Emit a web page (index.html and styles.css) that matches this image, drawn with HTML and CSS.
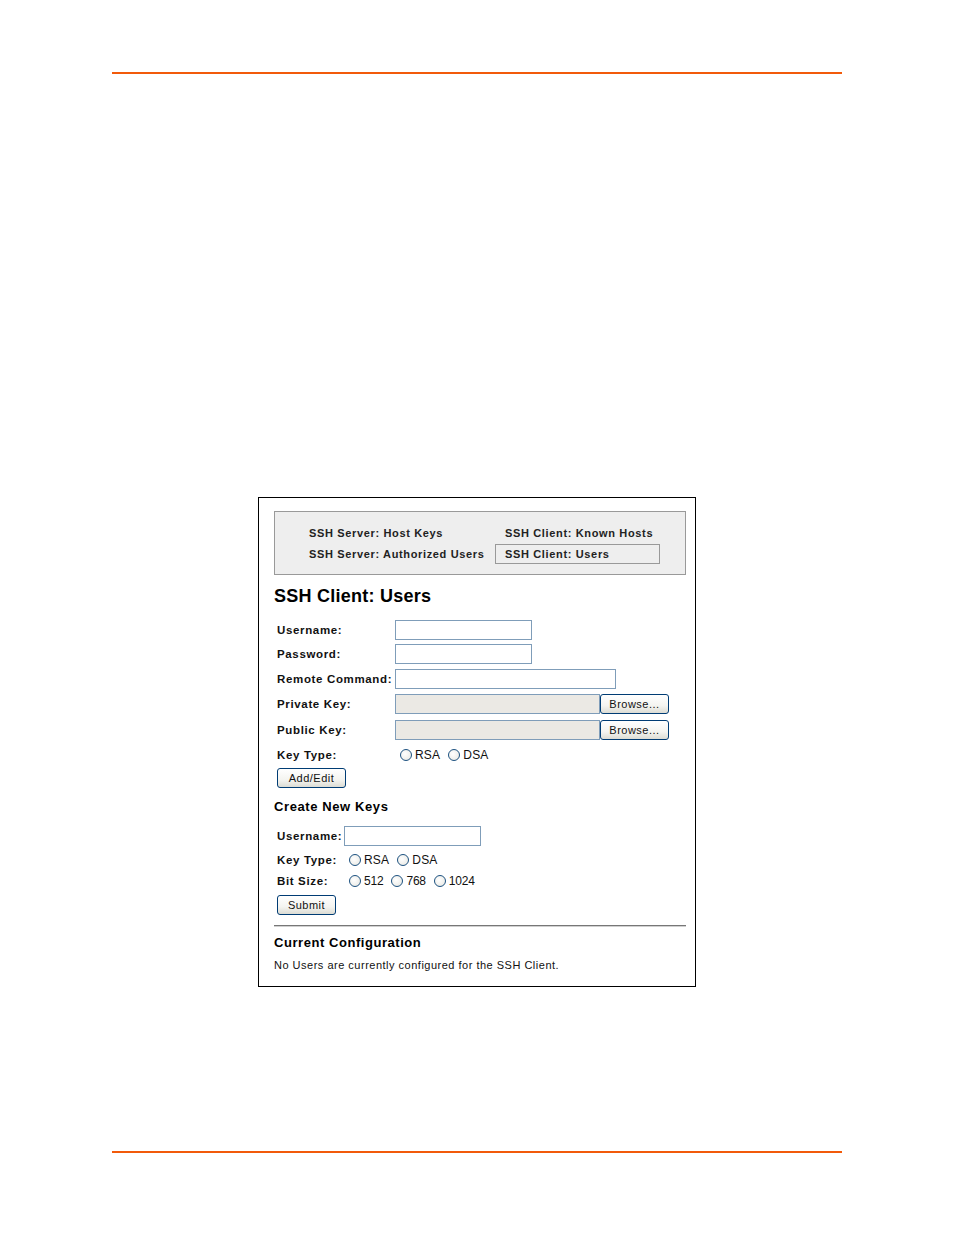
FILE: index.html
```html
<!DOCTYPE html>
<html>
<head>
<meta charset="utf-8">
<link rel="stylesheet" href="styles.css">
</head>
<body>
<div class="page">
  <div class="rule rule-top"></div>
  <div class="figure">
    <div class="nav">
      <div class="nav-item">SSH Server: Host Keys</div>
      <div class="nav-item nav-right">SSH Client: Known Hosts</div>
      <div class="nav-item">SSH Server: Authorized Users</div>
      <div class="nav-item nav-right nav-current">SSH Client: Users</div>
    </div>
    <h1 class="title">SSH Client: Users</h1>
    <div class="form">
      <div class="row h24"><span class="label">Username:</span><span class="input w136"></span></div>
      <div class="row h24"><span class="label">Password:</span><span class="input w136"></span></div>
      <div class="row h25"><span class="label">Remote Command:</span><span class="input w220"></span></div>
      <div class="row h25"><span class="label">Private Key:</span><span class="file"></span><span class="btn btn-browse">Browse...</span></div>
      <div class="row h26 row-low"><span class="label">Public Key:</span><span class="file"></span><span class="btn btn-browse">Browse...</span></div>
      <div class="row h25"><span class="label">Key Type:</span><span class="radios"><span class="radio"></span><span class="rtext">RSA</span><span class="radio"></span><span class="rtext">DSA</span></span></div>
      <div class="row h22"><span class="btn btn-add">Add/Edit</span></div>
    </div>
    <h2 class="sub sub-keys">Create New Keys</h2>
    <div class="form form2">
      <div class="row h24"><span class="label label-short">Username:</span><span class="input w136"></span></div>
      <div class="row h24"><span class="label label-short">Key Type:</span><span class="radios"><span class="radio"></span><span class="rtext">RSA</span><span class="radio"></span><span class="rtext">DSA</span></span></div>
      <div class="row h18"><span class="label label-short">Bit Size:</span><span class="radios"><span class="radio"></span><span class="rtext num">512</span><span class="radio"></span><span class="rtext num">768</span><span class="radio"></span><span class="rtext num">1024</span></span></div>
      <div class="row h30"><span class="btn btn-submit">Submit</span></div>
    </div>
    <div class="divider"></div>
    <h2 class="sub sub-config">Current Configuration</h2>
    <p class="note">No Users are currently configured for the SSH Client.</p>
  </div>
  <div class="rule rule-bottom"></div>
</div>
</body>
</html>
```
FILE: styles.css
```css
html, body {
  margin: 0;
  padding: 0;
  background: #ffffff;
}
body {
  font-family: "Liberation Sans", Arial, sans-serif;
  color: #000;
}
.page {
  width: 954px;
  height: 1235px;
  padding-top: 72px;
  box-sizing: border-box;
}
.rule {
  margin-left: 112px;
  width: 730px;
  height: 2px;
  background: #f25a0a;
}
.figure {
  margin-top: 423px;
  margin-left: 258px;
  width: 438px;
  height: 490px;
  box-sizing: border-box;
  border: 1px solid #000;
  padding: 13px 9px 0 15px;
}
.rule-bottom {
  margin-top: 164px;
}
.nav {
  height: 64px;
  box-sizing: border-box;
  border: 1px solid #999;
  background: #eeeeee;
  padding: 11px 0 0 34px;
  display: grid;
  grid-template-columns: 186px 165px;
  grid-auto-rows: 21px;
  font-size: 11px;
  font-weight: bold;
  letter-spacing: 0.65px;
  color: #222;
}
.nav-item {
  display: flex;
  align-items: center;
  white-space: nowrap;
  height: 20px;
}
.nav-right {
  padding-left: 10px;
}
.nav-current {
  border: 1px solid #999;
  box-sizing: border-box;
  padding-left: 9px;
}
.title {
  margin: 10px 0 0 0;
  font-size: 18px;
  font-weight: bold;
  letter-spacing: 0.25px;
  line-height: 22px;
  height: 22px;
}
.form {
  margin-top: 11px;
  padding-left: 3px;
  display: flex;
  flex-direction: column;
}
.row {
  display: flex;
  align-items: center;
}
.row-low {
  padding-top: 2px;
  box-sizing: border-box;
}
.h18 { height: 18px; }
.h22 { height: 22px; }
.h24 { height: 24px; }
.h25 { height: 25px; }
.h26 { height: 26px; }
.h30 { height: 30px; }
.label {
  width: 118px;
  font-size: 11.5px;
  font-weight: bold;
  letter-spacing: 0.65px;
  white-space: nowrap;
  color: #111;
}
.label-short {
  width: 67px;
}
.input {
  display: block;
  height: 20px;
  box-sizing: border-box;
  border: 1px solid #7f9db9;
  background: #fff;
}
.w136 { width: 137px; }
.w220 { width: 221px; }
.file {
  display: block;
  width: 205px;
  height: 20px;
  box-sizing: border-box;
  border: 1px solid #7f9db9;
  background: #ebe9e4;
}
.btn {
  display: flex;
  align-items: center;
  justify-content: center;
  height: 20px;
  box-sizing: border-box;
  border: 1px solid #003c74;
  border-radius: 3px;
  background: linear-gradient(#ffffff, #f4f4f0 60%, #dcdcd4);
  font-size: 11px;
  letter-spacing: 0.5px;
  color: #111;
}
.btn-browse {
  width: 69px;
}
.btn-add {
  width: 69px;
}
.btn-submit {
  width: 59px;
}
.radios {
  display: flex;
  align-items: center;
  margin-left: 5px;
  font-size: 12px;
  color: #111;
}
.radio {
  width: 12px;
  height: 12px;
  box-sizing: border-box;
  border: 1px solid #1c5180;
  border-radius: 50%;
  background: radial-gradient(circle at 40% 40%, #ffffff, #e6e6e0);
  margin-right: 3px;
}
.rtext {
  margin-right: 8px;
  letter-spacing: 0.2px;
}
.num {
  letter-spacing: -0.2px;
}
.sub {
  margin: 0;
  font-size: 13px;
  font-weight: bold;
  line-height: 16px;
}
.sub-keys {
  margin-top: 10px;
  letter-spacing: 0.6px;
}
.form2 {
  margin-top: 9px;
}
.divider {
  margin-top: 5px;
  height: 1px;
  background: #777;
  border-bottom: 1px solid #d0d0d0;
}
.sub-config {
  margin-top: 8px;
  letter-spacing: 0.55px;
}
.note {
  margin: 8px 0 0 0;
  font-size: 11px;
  line-height: 13px;
  letter-spacing: 0.5px;
  color: #111;
}
```
